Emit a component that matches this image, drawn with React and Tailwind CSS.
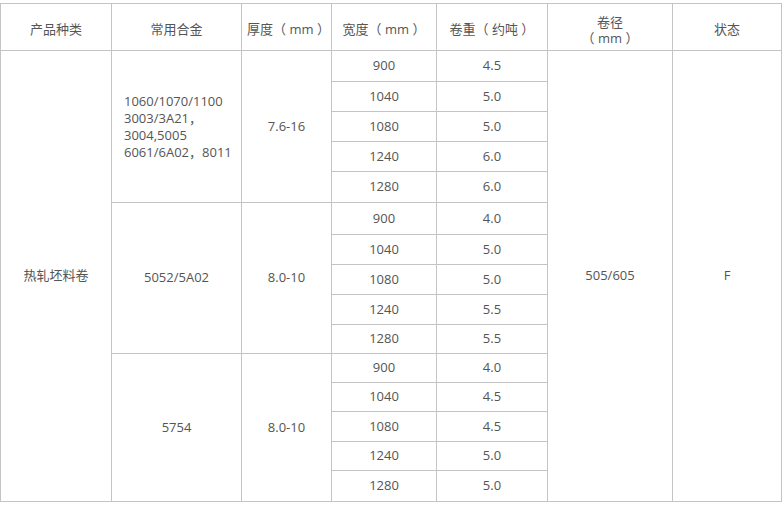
const groups = [
  {
    alloy: ["1060/1070/1100", "3003/3A21，", "3004,5005", "6061/6A02，8011"],
    left: true,
    thick: "7.6-16",
    heights: ["h-[31px]", "h-[30px]", "h-[30px]", "h-[30px]", "h-[31px]"],
    rows: [
      ["900", "4.5"],
      ["1040", "5.0"],
      ["1080", "5.0"],
      ["1240", "6.0"],
      ["1280", "6.0"],
    ],
  },
  {
    alloy: ["5052/5A02"],
    thick: "8.0-10",
    heights: ["h-[32px]", "h-[30px]", "h-[30px]", "h-[30px]", "h-[29px]"],
    rows: [
      ["900", "4.0"],
      ["1040", "5.0"],
      ["1080", "5.0"],
      ["1240", "5.5"],
      ["1280", "5.5"],
    ],
  },
  {
    alloy: ["5754"],
    thick: "8.0-10",
    heights: ["h-[29px]", "h-[29px]", "h-[30px]", "h-[29px]", "h-[31px]"],
    rows: [
      ["900", "4.0"],
      ["1040", "4.5"],
      ["1080", "4.5"],
      ["1240", "5.0"],
      ["1280", "5.0"],
    ],
  },
];

const cell = "border border-[#c4c4c4] text-center align-middle p-0";
const head = cell + " font-normal whitespace-pre pt-[5px]";

export default function App() {
  return (
    <div
      className="bg-white w-[782px] h-[512px] pt-[3px] text-[13px] text-[#555]"
      style={{ fontFamily: '"Open Sans", "Noto Sans CJK SC", sans-serif' }}
    >
      <table className="table-fixed border-collapse w-[781px]">
        <colgroup>
          <col className="w-[111px]" />
          <col className="w-[130px]" />
          <col className="w-[90px]" />
          <col className="w-[105px]" />
          <col className="w-[111px]" />
          <col className="w-[125px]" />
          <col className="w-[109px]" />
        </colgroup>
        <thead>
          <tr className="h-[47px]">
            <th className={head}>产品种类</th>
            <th className={head}>常用合金</th>
            <th className={head + " pl-[4px]"}>厚度（ mm ）</th>
            <th className={head}>宽度（ mm ）</th>
            <th className={head}>卷重（ 约吨 ）</th>
            <th className={head + " leading-[16px]"}>
              <div>卷径</div>
              <div>（ mm ）</div>
            </th>
            <th className={head}>状态</th>
          </tr>
        </thead>
        <tbody>
          {groups.map((g, gi) =>
            g.rows.map((r, ri) => (
              <tr key={gi + "-" + ri} className={g.heights[ri]}>
                {gi === 0 && ri === 0 && (
                  <td rowSpan={15} className={cell}>
                    热轧坯料卷
                  </td>
                )}
                {ri === 0 && (
                  <td
                    rowSpan={5}
                    className={cell + (g.left ? " !text-left pl-[12px] leading-[17px]" : "")}
                  >
                    {g.alloy.map((a, i) => (
                      <div key={i}>{a}</div>
                    ))}
                  </td>
                )}
                {ri === 0 && (
                  <td rowSpan={5} className={cell}>
                    {g.thick}
                  </td>
                )}
                <td className={cell}>{r[0]}</td>
                <td className={cell}>{r[1]}</td>
                {gi === 0 && ri === 0 && (
                  <td rowSpan={15} className={cell}>
                    505/605
                  </td>
                )}
                {gi === 0 && ri === 0 && (
                  <td rowSpan={15} className={cell}>
                    F
                  </td>
                )}
              </tr>
            ))
          )}
        </tbody>
      </table>
    </div>
  );
}
